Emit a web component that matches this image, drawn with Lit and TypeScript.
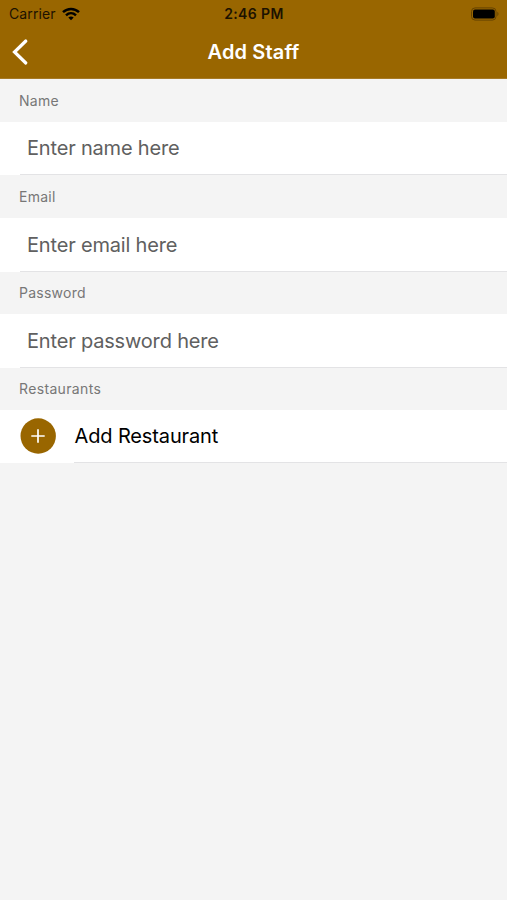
import { LitElement, html, css } from "lit";
import { customElement } from "lit/decorators.js";

const FIELDS = [
  { label: "Name", hint: "Enter name here", key: "name" },
  { label: "Email", hint: "Enter email here", key: "email" },
  { label: "Password", hint: "Enter password here", key: "password" },
];

@customElement("app-root")
export class AppRoot extends LitElement {
  static styles = css`
    :host {
      display: block;
      min-height: 900px;
      background: #f4f4f4;
      font-family: Inter, "Liberation Sans", sans-serif;
      color: #000;
    }
    .top {
      height: 79px;
      box-sizing: border-box;
      background: #996600;
      border-bottom: 1px solid #a67a26;
    }
    .status {
      display: grid;
      grid-template-columns: 1fr auto 1fr;
      align-items: center;
      height: 27px;
      padding: 0 7px 0 9px;
      font-size: 14px;
      line-height: 28px;
      color: #1c1200;
    }
    .carrier { display: flex; align-items: center; gap: 6px; letter-spacing: 0.1px; }
    .time { font-weight: 600; letter-spacing: 0.4px; margin-right: 1px; }
    .battery { justify-self: end; }
    svg { display: block; }
    .bar {
      display: grid;
      grid-template-columns: 60px 1fr 60px;
      align-items: center;
      height: 50px;
    }
    .back { margin-left: 12px; }
    .title {
      text-align: center;
      color: #fff;
      font-size: 20px;
      font-weight: 600;
      line-height: 50px;
      letter-spacing: 0.15px;
    }
    .label {
      height: 42px;
      padding-left: 19px;
      font-size: 14px;
      line-height: 42px;
      letter-spacing: 0.25px;
      color: #777;
    }
    .label.name, .label.email { height: 43px; line-height: 43px; }
    .label.restaurants { letter-spacing: 0.35px; }
    .row {
      display: flex;
      align-items: center;
      height: 54px;
      background: #fff;
    }
    .row.name, .row.add { height: 53px; }
    .cell {
      flex: 1;
      box-sizing: border-box;
      height: 100%;
      margin-left: 20px;
      padding-left: 7px;
      border-bottom: 1px solid #e3e3e5;
      font-size: 20px;
      line-height: 54px;
      letter-spacing: -0.18px;
      color: #606060;
    }
    .name .cell { line-height: 52px; }
    .plus { margin: 0 0 1px 20px; }
    .add .cell { margin-left: 18px; padding-left: 0.5px; line-height: 52px; letter-spacing: -0.13px; color: #000; }
  `;

  render() {
    return html`
      <header class="top">
        <div class="status">
          <div class="carrier">
            <span>Carrier</span>
            <svg width="18" height="14" viewBox="0 0 18 14" fill="none" stroke="#000" stroke-width="2.5">
              <path d="M1 5.2C5.6 0.8 12.4 0.8 17 5.2" />
              <path d="M4 8.3C6.9 5.6 11.1 5.6 14 8.3" />
              <path d="M6.3 10.6Q9 8.3 11.7 10.6L9 13.3Z" fill="#000" stroke="none" />
            </svg>
          </div>
          <span class="time">2:46 PM</span>
          <svg class="battery" width="30" height="14" viewBox="0 0 30 14">
            <rect x="1.5" y="0.9" width="24.5" height="12.2" rx="3.6" fill="none" stroke="#654300" />
            <rect x="3" y="2.5" width="21.8" height="9" rx="2" fill="#000" />
            <path d="M27.4 4.8Q29.6 7 27.4 9.2Z" fill="#654300" />
          </svg>
        </div>
        <div class="bar">
          <svg class="back" width="17" height="28" viewBox="0 0 17 28" fill="none" stroke="#fff" stroke-width="3.2" stroke-linecap="round">
            <path d="M13.8 3L2.5 14L13.8 25" />
          </svg>
          <span class="title">Add Staff</span>
        </div>
      </header>
      <main>
        ${FIELDS.map(
          (f) => html`
            <section>
              <div class="label ${f.key}">${f.label}</div>
              <div class="row ${f.key}"><div class="cell">${f.hint}</div></div>
            </section>
          `
        )}
        <section>
          <div class="label restaurants">Restaurants</div>
          <div class="row add">
            <svg class="plus" width="36" height="36" viewBox="0 0 36 36">
              <circle cx="18.2" cy="18" r="17.7" fill="#996600" />
              <path d="M11.3 18H24.7M18 11.3V24.7" stroke="#fff" stroke-width="1.7" />
            </svg>
            <div class="cell">Add Restaurant</div>
          </div>
        </section>
      </main>
    `;
  }
}
